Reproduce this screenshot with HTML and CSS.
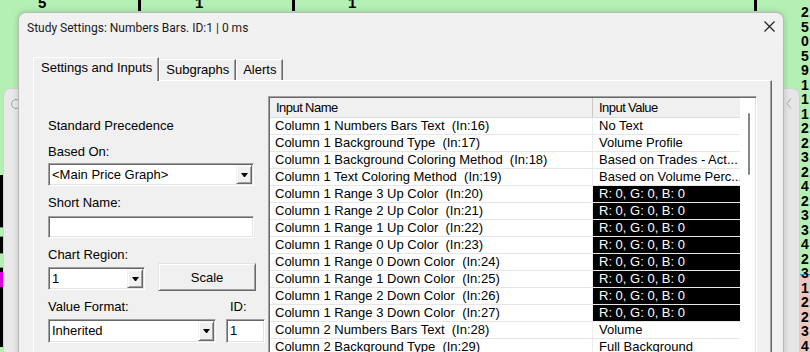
FILE: index.html
```html
<!DOCTYPE html>
<html>
<head>
<meta charset="utf-8">
<link rel="stylesheet" href="styles.css">
</head>
<body>
<div class="chart-top">
  <span class="tnum n5">5</span>
  <span class="tnum n1a">1</span>
  <span class="tnum n1b">1</span>
  <span class="tick t1"></span>
  <span class="tick t2"></span>
  <span class="tick t3"></span>
</div>

<div class="lstrip">
  <div class="lbar black h52"></div>
  <div class="lbar green h10"></div>
  <div class="lbar black h16"></div>
  <div class="lbar green h15"></div>
  <div class="lbar black h4"></div>
  <div class="lbar magenta h15"></div>
  <div class="lbar black h60"></div>
</div>

<div class="rcol">
  <span>2</span><span>5</span><span>0</span><span>5</span><span>9</span><span>1</span><span>1</span><span>1</span><span>2</span><span>2</span><span>3</span><span>2</span><span>4</span><span>2</span><span>3</span><span>3</span><span>4</span><span>2</span><span>3</span><span>1</span><span>2</span><span>2</span><span>3</span><span>4</span>
</div>

<div class="bwin bwin-left">
  <svg class="bw-icon" width="12" height="12" viewBox="0 0 12 12"><circle cx="6" cy="6" r="4.5" fill="none" stroke="#a3a3a3" stroke-width="1"/></svg>
</div>
<div class="bwin bwin-right">
  <svg class="bw-chev" width="6" height="11" viewBox="0 0 6 11"><path d="M5 0.5 L1 5.5 L5 10.5" fill="none" stroke="#a8a8a8" stroke-width="1"/></svg>
</div>

<div class="dialog">
  <div class="titlebar">
    <span class="title">Study Settings: Numbers Bars. ID:1 | 0 ms</span>
    <svg class="close" width="11" height="11" viewBox="0 0 11 11"><path d="M0.5 0.5 L10.5 10.5 M10.5 0.5 L0.5 10.5" stroke="#1a1a1a" stroke-width="1.1"/></svg>
  </div>
  <div class="tabs">
    <div class="tab active">Settings and Inputs</div>
    <div class="tab">Subgraphs</div>
    <div class="tab">Alerts</div>
  </div>
  <div class="panel">
    <div class="lc">
      <div class="lbl prec">Standard Precedence</div>
      <div class="lbl m10">Based On:</div>
      <div class="select w206 m3"><span class="sel-text">&lt;Main Price Graph&gt;</span><span class="ddbtn"><i class="tri"></i></span></div>
      <div class="lbl m9">Short Name:</div>
      <div class="edit w206 m5"></div>
      <div class="frow m9">
        <div class="field">
          <div class="lbl">Chart Region:</div>
          <div class="select w97 m4"><span class="sel-text">1</span><span class="ddbtn"><i class="tri"></i></span></div>
        </div>
        <div class="btn">Scale</div>
      </div>
      <div class="frow2 m9">
        <div class="field">
          <div class="lbl">Value Format:</div>
          <div class="select w168 h24 m4"><span class="sel-text">Inherited</span><span class="ddbtn"><i class="tri"></i></span></div>
        </div>
        <div class="field idf">
          <div class="lbl idl">ID:</div>
          <div class="edit w39 h24 m4"><span class="sel-text">1</span></div>
        </div>
      </div>
    </div>

    <div class="grid">
      <div class="list">
        <div class="hdr">
          <div class="h-name">Input Name</div>
          <div class="h-val">Input Value</div>
        </div>
        <div class="row"><div class="c-name">Column 1 Numbers Bars Text  (In:16)</div><div class="c-val">No Text</div></div>
        <div class="row"><div class="c-name">Column 1 Background Type  (In:17)</div><div class="c-val">Volume Profile</div></div>
        <div class="row"><div class="c-name">Column 1 Background Coloring Method  (In:18)</div><div class="c-val">Based on Trades - Act...</div></div>
        <div class="row"><div class="c-name">Column 1 Text Coloring Method  (In:19)</div><div class="c-val">Based on Volume Perc...</div></div>
        <div class="row"><div class="c-name">Column 1 Range 3 Up Color  (In:20)</div><div class="c-val dark">R: 0, G: 0, B: 0</div></div>
        <div class="row"><div class="c-name">Column 1 Range 2 Up Color  (In:21)</div><div class="c-val dark">R: 0, G: 0, B: 0</div></div>
        <div class="row"><div class="c-name">Column 1 Range 1 Up Color  (In:22)</div><div class="c-val dark">R: 0, G: 0, B: 0</div></div>
        <div class="row"><div class="c-name">Column 1 Range 0 Up Color  (In:23)</div><div class="c-val dark">R: 0, G: 0, B: 0</div></div>
        <div class="row"><div class="c-name">Column 1 Range 0 Down Color  (In:24)</div><div class="c-val dark">R: 0, G: 0, B: 0</div></div>
        <div class="row"><div class="c-name">Column 1 Range 1 Down Color  (In:25)</div><div class="c-val dark">R: 0, G: 0, B: 0</div></div>
        <div class="row"><div class="c-name">Column 1 Range 2 Down Color  (In:26)</div><div class="c-val dark">R: 0, G: 0, B: 0</div></div>
        <div class="row"><div class="c-name">Column 1 Range 3 Down Color  (In:27)</div><div class="c-val dark">R: 0, G: 0, B: 0</div></div>
        <div class="row"><div class="c-name">Column 2 Numbers Bars Text  (In:28)</div><div class="c-val">Volume</div></div>
        <div class="row"><div class="c-name">Column 2 Background Type  (In:29)</div><div class="c-val">Full Background</div></div>
      </div>
      <div class="scroll"><div class="thumb"></div></div>
    </div>
  </div>
</div>
</body>
</html>
```

FILE: styles.css
```css
* { box-sizing: border-box; margin: 0; padding: 0; }
html, body { width: 810px; height: 352px; overflow: hidden; }
body {
  position: relative;
  background: #b4f0b4;
  font-family: "Liberation Sans", Arial, sans-serif;
  font-size: 13px;
  color: #000;
}

/* chart behind */
.chart-top { position: absolute; left: 0; top: 0; width: 810px; height: 12px; }
.tnum { position: absolute; top: -5px; font-weight: bold; font-size: 15px; line-height: 16px; }
.n5 { left: 38px; }
.n1a { left: 195px; }
.n1b { left: 348px; }
.tick { position: absolute; top: 0; width: 3px; height: 11px; background: #000; }
.t1 { left: 138px; }
.t2 { left: 292px; }
.t3 { left: 754px; }

.lstrip { position: absolute; left: 0; top: 175px; width: 3px; display: flex; flex-direction: column; }
.lbar { width: 3px; }
.black { background: #000; }
.green { background: #b4f0b4; border-top: 1px solid #6a9a6a; border-bottom: 1px solid #6a9a6a; }
.magenta { background: #e000e0; }
.h52 { height: 52px; } .h10 { height: 10px; } .h16 { height: 16px; } .h15 { height: 15px; } .h4 { height: 4px; } .h60 { height: 60px; }

.rcol {
  position: absolute; left: 800px; top: 0; width: 10px; height: 352px;
  background: linear-gradient(#b4f0b4 0 274px, #2a9a9a 274px 275px, #ebc8c0 275px);
  display: flex; flex-direction: column; padding-top: 5px; padding-left: 1px;
  font-weight: bold; font-size: 14px; line-height: 14.5px;
}

.bwin { position: absolute; top: 88px; height: 280px; background: #e9e9e9; border: 1px solid #d2d2d2; }
.bwin-left { left: 3px; width: 40px; border-radius: 8px 0 0 0; padding: 9px 0 0 6px; }
.bwin-right { left: 760px; width: 40px; border-radius: 0 8px 0 0; padding: 9px 0 0 25px; background: #e6e6e6; }
.bw-icon, .bw-chev { display: block; }

/* dialog */
.dialog {
  position: absolute; left: 18px; top: 12px; width: 766px; height: 360px;
  background: #f0f0f0; border: 1px solid #b9b9b9; border-radius: 8px 8px 0 0;
  box-shadow: 0 0 6px rgba(0,0,0,0.18);
}
.titlebar {
  height: 29px; display: flex; align-items: center; justify-content: space-between;
  padding: 0 8px 0 8px; background: #f2f1f2; border-radius: 8px 8px 0 0;
}
.title { font-family: Roboto, "Liberation Sans", sans-serif; font-size: 12px; color: #1b1b1b; }
.close { margin-bottom: 3px; }

.tabs { display: flex; align-items: flex-end; height: 23px; margin: 15px 0 0 14px; }
.tab {
  height: 21px; line-height: 19px; padding: 0 6px;
  border-style: solid; border-width: 1px 1px 0 1px;
  border-color: #fff #696969 transparent #fff;
  box-shadow: inset -1px 0 #a0a0a0;
  background: #f0f0f0; white-space: nowrap;
}
.tab.active {
  position: relative; z-index: 1; height: 24px; margin-bottom: -1px;
  padding: 0 6px 0 7px; line-height: 19px;
}

.panel {
  position: relative; margin-left: 14px; width: 739px; height: 290px;
  border: 1px solid; border-color: #fff #696969 #696969 #fff;
  box-shadow: inset -1px 0 #a0a0a0;
  display: flex; align-items: flex-start;
}

.lc { width: 220px; margin-left: 14px; padding-top: 37px; flex-shrink: 0; }
.lbl { line-height: 16px; height: 16px; white-space: nowrap; }
.m3 { margin-top: 3px; } .m4 { margin-top: 4px; } .m5 { margin-top: 5px; } .m9 { margin-top: 9px; } .m10 { margin-top: 10px; }
.w206 { width: 206px; } .w97 { width: 97px; } .w168 { width: 168px; } .w39 { width: 39px; }

.select, .edit {
  height: 23px; display: flex; align-items: center; background: #fff;
  border: 1px solid; border-color: #a0a0a0 #fff #fff #a0a0a0;
  box-shadow: inset 1px 1px #696969, inset -1px -1px #e3e3e3;
  padding: 1px;
}
.edit { height: 22px; }
.select.h24, .edit.h24 { height: 24px; }
.sel-text { padding-left: 2px; white-space: nowrap; line-height: 16px; }
.ddbtn {
  margin-left: auto; width: 16px; height: 100%;
  background: #f0f0f0; border: 1px solid; border-color: #f0f0f0 #696969 #696969 #f0f0f0;
  box-shadow: inset 1px 1px #fff, inset -1px -1px #a0a0a0;
  display: flex; align-items: center; justify-content: center;
}
.tri { display: block; width: 1px; height: 0; border-left: 3px solid transparent; border-right: 3px solid transparent; border-top: 4px solid #000; box-sizing: content-box; }

.frow { display: flex; align-items: flex-end; gap: 13px; }
.btn {
  width: 98px; height: 28px; margin-bottom: -1px;
  display: flex; align-items: center; justify-content: center;
  background: #f0f0f0; border: 1px solid; border-color: #e3e3e3 #696969 #696969 #e3e3e3;
  box-shadow: inset 1px 1px #fff, inset -1px -1px #a0a0a0;
}
.frow2 { display: flex; }
.idf { margin-left: 10px; }
.idl { padding-left: 4px; }

/* grid */
.grid {
  margin-top: 15px; width: 489px; height: 270px; overflow: hidden;
  border: 1px solid; border-color: #a0a0a0 #fff #fff #a0a0a0;
  box-shadow: inset 1px 1px #696969, inset -1px -1px #e3e3e3;
  padding: 1px; background: #fff; display: flex; flex-shrink: 0;
}
.list { width: 470px; flex-shrink: 0; }
.hdr { display: flex; height: 20px; background: #f0f0f0; border-bottom: 1px solid #dcdcdc; line-height: 19px; letter-spacing: -0.5px; word-spacing: -0.5px; }
.h-name { width: 323px; padding-left: 6px; border-right: 1px solid #c9c9c9; }
.h-val { width: 147px; padding-left: 6px; }
.row { display: flex; height: 17px; border-bottom: 1px solid #e6e6e6; line-height: 16px; white-space: pre; }
.c-name { width: 323px; padding-left: 5px; border-right: 1px solid #ececec; overflow: hidden; }
.c-val { width: 147px; padding-left: 6px; overflow: hidden; }
.c-val.dark { background: #000; color: #fff; }
.scroll { flex: 1; background: #fff; }
.thumb { width: 2px; height: 62px; margin: 15px 0 0 8px; background: #868686; border-radius: 1px; }
```
